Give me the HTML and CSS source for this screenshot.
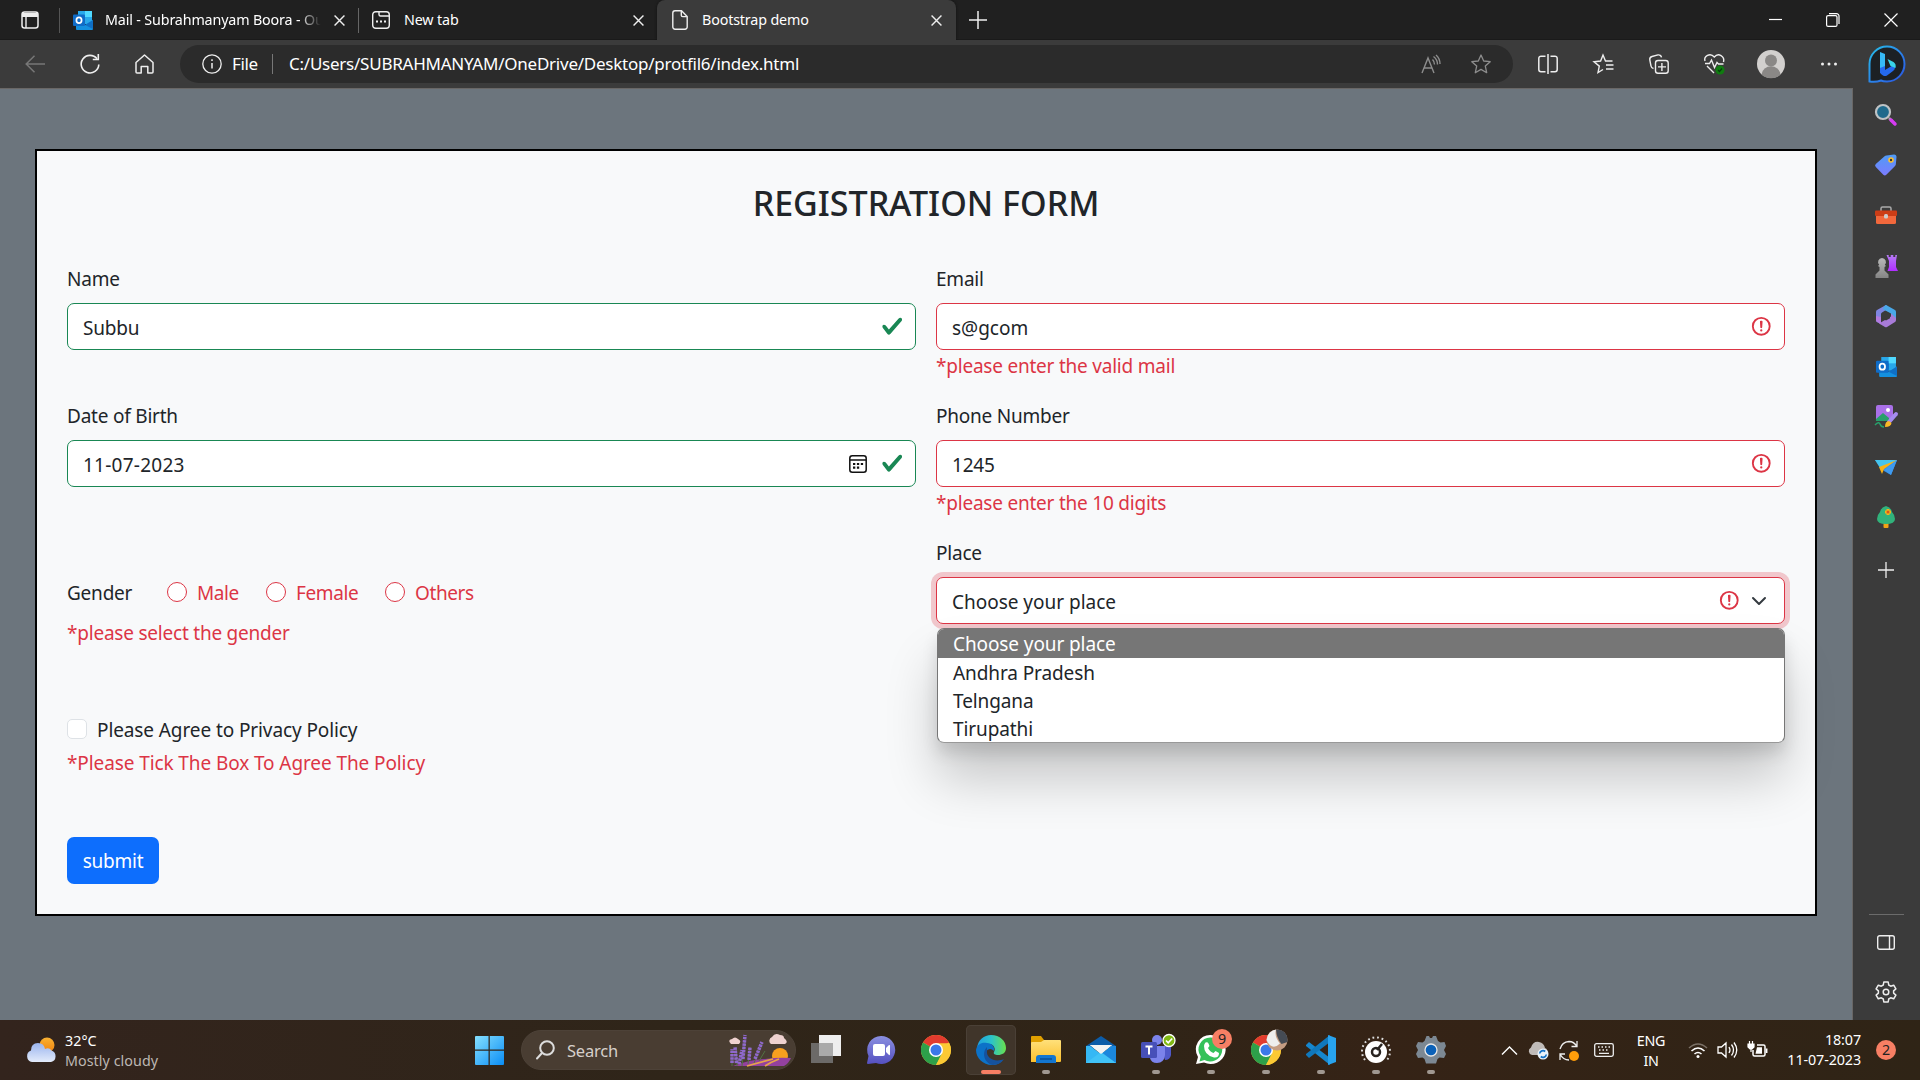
FILE: index.html
```html
<!DOCTYPE html>
<html lang="en">
<head>
<meta charset="utf-8">
<title>Bootstrap demo</title>
<link rel="stylesheet" href="styles.css">
</head>
<body>
<svg class="defs" width="0" height="0" aria-hidden="true">
  <defs>
    <linearGradient id="gBing" x1="0" y1="0" x2="1" y2="1"><stop offset="0" stop-color="#26c0ea"/><stop offset=".6" stop-color="#2b7be8"/><stop offset="1" stop-color="#2a52dd"/></linearGradient>
    <linearGradient id="gTag" x1="0" y1="0" x2="0" y2="1"><stop offset="0" stop-color="#4f9cf5"/><stop offset="1" stop-color="#7c7cff"/></linearGradient>
    <linearGradient id="gPurple" x1="0" y1="0" x2="0" y2="1"><stop offset="0" stop-color="#b57bf5"/><stop offset="1" stop-color="#b02dff"/></linearGradient>
    <linearGradient id="gGrey" x1="0" y1="0" x2="0" y2="1"><stop offset="0" stop-color="#b8b8b8"/><stop offset="1" stop-color="#858585"/></linearGradient>
    <linearGradient id="gWin" x1="0" y1="0" x2="1" y2="1"><stop offset="0" stop-color="#85e0ff"/><stop offset="1" stop-color="#0a8df5"/></linearGradient>
    <linearGradient id="gChat" x1="0" y1="0" x2="0" y2="1"><stop offset="0" stop-color="#8a8fe0"/><stop offset="1" stop-color="#5550c0"/></linearGradient>
    <linearGradient id="gEdgeTop" x1="0" y1="0" x2="1" y2="0"><stop offset="0" stop-color="#1f9fe0"/><stop offset=".5" stop-color="#2cc3c9"/><stop offset="1" stop-color="#69e04c"/></linearGradient>
    <linearGradient id="gFolder" x1="0" y1="0" x2="0" y2="1"><stop offset="0" stop-color="#ffe07a"/><stop offset="1" stop-color="#fbc02d"/></linearGradient>
    <linearGradient id="gCloud" x1="0" y1="0" x2="0" y2="1"><stop offset="0" stop-color="#9ab4ee"/><stop offset="1" stop-color="#e3ebfb"/></linearGradient>
    <linearGradient id="gSun" x1="0" y1="0" x2="0" y2="1"><stop offset="0" stop-color="#f9b233"/><stop offset="1" stop-color="#f0820f"/></linearGradient>
    <symbol id="check" viewBox="0 0 8 8"><path fill="#198754" d="M2.3 6.73.6 4.53c-.4-1.04.46-1.4 1.1-.8l1.1 1.4 3.4-3.8c.6-.63 1.6-.27 1.2.7l-4 4.6c-.43.5-.8.4-1.1.1z"/></symbol>
    <symbol id="alert" viewBox="0 0 12 12"><g fill="none" stroke="#dc3545"><circle cx="6" cy="6" r="4.5"/><path stroke-linejoin="round" d="M5.8 3.6h.4L6 6.5z"/></g><circle cx="6" cy="8.2" r=".6" fill="#dc3545"/></symbol>
    <symbol id="x" viewBox="0 0 10 10"><path d="M.5.5l9 9M9.5.5l-9 9" stroke="#eee" stroke-width="1.3" fill="none"/></symbol>
    <symbol id="outlook" viewBox="0 0 20 19"><rect x="5" y="0" width="14" height="13" fill="#28a8ea"/><path d="M12 0h7v6h-7z" fill="#50d9ff"/><path d="M5 6h7v6H5z" fill="#0a5fb0"/><path d="M3 9l9 5 8-5v9a1 1 0 0 1-1 1H4a1 1 0 0 1-1-1z" fill="#1490df"/><path d="M20 9v9l-8-4z" fill="#0f6fc5"/><rect x="0" y="3.500" width="12" height="11.500" rx="1" fill="#0f6cc8"/><ellipse cx="6" cy="9.200" rx="2.600" ry="2.900" fill="none" stroke="#fff" stroke-width="1.700"/></symbol>
    <symbol id="chrome" viewBox="0 0 30 30"><circle cx="15" cy="15" r="15" fill="#fcc934"/><path d="M2 7.500A15 15 0 0 1 28 7.500L15 15z" fill="#e23b2e"/><path d="M2 7.500A15 15 0 0 0 15 30l6.500-11.200L15 15z" fill="#2da04a"/><path d="M15 8.200h13.300A15 15 0 0 1 15 30l6-12z" fill="#fcc934"/><circle cx="15" cy="15" r="7" fill="#fff"/><circle cx="15" cy="15" r="5.500" fill="#3b78e7"/></symbol>
  </defs>
</svg>

<header class="tabs">
  <svg class="tabmenu" width="18" height="18" viewBox="0 0 18 18"><rect x="1" y="1" width="16" height="16" rx="2.500" fill="none" stroke="#eee" stroke-width="1.500"/><path d="M1 2h16v4H1z" fill="#eee"/><path d="M5 5v12" stroke="#eee" stroke-width="1.400"/></svg>
  <div class="tab mail"><svg width="20" height="19"><use href="#outlook"/></svg><span class="fade">Mail - Subrahmanyam Boora - Ou</span><svg class="close" width="11" height="11"><use href="#x"/></svg></div>
  <div class="tab newtab"><svg width="18" height="18" viewBox="0 0 18 18" fill="none" stroke="#eee" stroke-width="1.400"><rect x=".7" y=".7" width="16.600" height="16.600" rx="3"/><path d="M7 1v2.500a1.500 1.500 0 0 0 1.500 1.500H17"/><path d="M4 10.500h2m2 0h2m2 0h2" stroke-width="2"/></svg><span>New tab</span><svg class="close" width="11" height="11"><use href="#x"/></svg></div>
  <div class="tab active"><svg width="16" height="20" viewBox="0 0 16 20" fill="none" stroke="#eee" stroke-width="1.400"><path d="M3 .8h6.500L15.200 6.500V17a2.200 2.200 0 0 1-2.200 2.200H3A2.200 2.200 0 0 1 .8 17V3A2.200 2.200 0 0 1 3 .8z"/><path d="M9.300 1v4.200a1.400 1.400 0 0 0 1.400 1.400h4.300"/></svg><span>Bootstrap demo</span><svg class="close" width="11" height="11"><use href="#x"/></svg></div>
  <svg class="plus" width="18" height="18" viewBox="0 0 18 18"><path d="M9 0v18M0 9h18" stroke="#eee" stroke-width="1.500"/></svg>
  <div class="window">
    <svg width="14" height="14" viewBox="0 0 14 14"><path d="M0 6.500h13" stroke="#fff" stroke-width="1.200"/></svg>
    <svg width="14" height="14" viewBox="0 0 14 14" fill="none" stroke="#fff" stroke-width="1.200"><rect x=".6" y="2.600" width="10.400" height="10.800" rx="1.500"/><path d="M3 .6h7.500a2.500 2.500 0 0 1 2.500 2.500V11"/></svg>
    <svg width="14" height="14" viewBox="0 0 14 14"><path d="M.5.500l13 13M13.500.500l-13 13" stroke="#fff" stroke-width="1.200"/></svg>
  </div>
</header>

<nav class="toolbar">
  <svg class="nav" width="20" height="18" viewBox="0 0 20 18" fill="none" stroke="#777" stroke-width="1.500"><path d="M9.500.8L1.200 9l8.300 8.200M1.500 9H20"/></svg>
  <svg class="nav" width="20" height="20" viewBox="0 0 20 20" fill="none" stroke="#eee" stroke-width="1.600"><path d="M18.800 10.500A8.800 8.800 0 1 1 17 4.800"/><path d="M18.300 0v5.500h-5.500"/></svg>
  <svg class="nav" width="19" height="20" viewBox="0 0 19 20" fill="none" stroke="#eee" stroke-width="1.500" stroke-linejoin="round"><path d="M1 8.500L9.500 1 18 8.500V18a1 1 0 0 1-1 1h-4.200v-6.500H6.200V19H2a1 1 0 0 1-1-1z"/></svg>
  <div class="address">
    <svg width="20" height="20" viewBox="0 0 20 20" fill="none" stroke="#eee" stroke-width="1.300"><circle cx="10" cy="10" r="9.200"/><path d="M10 9v5.500M10 5.300v1.800" stroke-width="1.500"/></svg>
    <span class="scheme">File</span><i></i><span class="url">C:/Users/SUBRAHMANYAM/OneDrive/Desktop/protfil6/index.html</span>
    <svg class="read" width="20" height="19" viewBox="0 0 20 19" fill="none" stroke="#8d8d8d" stroke-width="1.400"><path d="M1 18L7 3l6 15M3 13h8M11.500 4.500q2 2 2 5M12.500 1.500q4 3 4 8M15 0q4 3.500 4 9"/></svg>
    <svg class="star" width="20" height="20" viewBox="0 0 20 20" fill="none" stroke="#8d8d8d" stroke-width="1.300" stroke-linejoin="round"><path d="M10 1l2.700 6 6.500.7-4.900 4.400 1.400 6.600L10 15.400l-5.700 3.300 1.400-6.600L.8 7.700 7.300 7z"/></svg>
  </div>
  <div class="tools">
    <svg width="20" height="20" viewBox="0 0 20 20" fill="none" stroke="#eee" stroke-width="1.500"><path d="M7.500 2.200H3A2.200 2.200 0 0 0 .8 4.400v11.200A2.200 2.200 0 0 0 3 17.800h4.500M12.500 2.200H17a2.200 2.200 0 0 1 2.200 2.200v11.200a2.200 2.200 0 0 1-2.200 2.200h-4.500M10 0v20"/></svg>
    <svg width="21" height="20" viewBox="0 0 21 20" fill="none" stroke="#eee" stroke-width="1.400"><path d="M10 15.500l-5 3 1.300-6.400L1 7.700 7.600 7 10 1l2.500 6h7M13 11h7.500M13 15h7.500"/></svg>
    <svg width="20" height="20" viewBox="0 0 20 20" fill="none" stroke="#eee" stroke-width="1.400"><path d="M4.500 14.500A3 3 0 0 1 2 12L.8 5.800a3 3 0 0 1 2.200-3.300l6-1.600a3 3 0 0 1 3.500 2.400"/><rect x="6.500" y="6.500" width="12.700" height="12.700" rx="2.500"/><path d="M12.900 9v8M9 12.900h8"/></svg>
    <svg width="21" height="21" viewBox="0 0 21 21" fill="none" stroke="#eee" stroke-width="1.400"><path d="M1 7C-.5 2.500 6-2 10.300 3 14.500-2 21 2.500 19.500 8M1 9.500h4.500l2-3.500 3 7.500 2.500-5 1.500 1.500h5M3 12l7 7"/><circle cx="16" cy="16" r="4.600" fill="#107c10" stroke="none"/><path d="M14 16l1.500 1.500 2.500-3" stroke="#06400b" stroke-width="1.200"/></svg>
    <svg width="28" height="28" viewBox="0 0 28 28"><circle cx="14" cy="14" r="14" fill="#d2d0ce"/><circle cx="14" cy="10.500" r="6" fill="#8a8886"/><path d="M4.500 24.500a9.600 9.600 0 0 1 19 0A14 14 0 0 1 4.500 24.500z" fill="#8a8886"/></svg>
    <svg width="18" height="6" viewBox="0 0 18 6" fill="#eee"><circle cx="2.500" cy="3" r="1.500"/><circle cx="9" cy="3" r="1.500"/><circle cx="15.500" cy="3" r="1.500"/></svg>
  </div>
  <svg class="bing" width="40" height="40" viewBox="0 0 40 40"><path d="M3.500 37.500V20A17.500 17.500 0 1 1 21 37.500q-4 0-6-1-5 2-11.500 1z" fill="#1c2024" stroke="url(#gBing)" stroke-width="2"/><path d="M14 8l5 2v15.500L14 29z" fill="#36b9f5"/><path d="M14 24l5-2v4l10-6v3.500q0 2-2 3.500l-6 4.500q-2 1-4 0l-2-1.500q-1-1-1-2z" fill="#2469ee"/><path d="M21.500 15l6 3q3 2 2 6l-5-2z" fill="#39d3e8"/></svg>
</nav>

<div class="middle">
<main class="page">
  <form class="card" onsubmit="return false">
    <h3>REGISTRATION FORM</h3>
    <div class="grid">
      <div class="cell"><label>Name</label><div class="input valid"><span>Subbu</span><svg class="state"><use href="#check"/></svg></div></div>
      <div class="cell"><label>Email</label><div class="input invalid"><span class="wide">s@gcom</span><svg class="state"><use href="#alert"/></svg></div><p class="err">*please enter the valid mail</p></div>
      <div class="cell"><label>Date of Birth</label><div class="input valid"><span class="num">11-07-2023</span><svg class="cal" viewBox="0 0 18 18" fill="none" stroke="#111" stroke-width="1.500"><rect x=".8" y=".8" width="16.400" height="16.400" rx="2.500"/><path d="M1 5h16"/><path d="M4 9h2.300m1.600 0h2.300m1.600 0h2.300M4 12.700h2.300m1.600 0h2.300" stroke-width="2.200"/></svg><svg class="state"><use href="#check"/></svg></div></div>
      <div class="cell"><label>Phone Number</label><div class="input invalid"><span>1245</span><svg class="state"><use href="#alert"/></svg></div><p class="err">*please enter the 10 digits</p></div>
      <div class="cell lower">
        <div class="choices"><span class="gender">Gender</span><span class="radio male"><i></i>Male</span><span class="radio female"><i></i>Female</span><span class="radio"><i></i>Others</span></div>
        <p class="err gap">*please select the gender</p>
      </div>
      <div class="cell"><label>Place</label>
        <div class="input invalid focus"><span class="wide">Choose your place</span><svg class="state"><use href="#alert"/></svg><svg class="chev" viewBox="0 0 16 16"><path fill="none" stroke="#343a40" stroke-linecap="round" stroke-linejoin="round" stroke-width="2" d="m2 5 6 6 6-6"/></svg>
          <ul class="menu"><li class="sel">Choose your place</li><li>Andhra Pradesh</li><li>Telngana</li><li>Tirupathi</li></ul>
        </div>
      </div>
      <div class="cell lower policy">
        <div class="choices"><i class="box"></i><span>Please Agree to Privacy Policy</span></div>
        <p class="err">*Please Tick The Box To Agree The Policy</p>
      </div>
    </div>
    <button class="submit">submit</button>
  </form>
</main>
<aside class="side">
  <svg viewBox="0 0 24 24"><path d="M15 15l3 3" stroke="#aaa" stroke-width="2.500"/><path d="M17 17l4 4" stroke="#d63bf2" stroke-width="3.500" stroke-linecap="round"/><circle cx="9" cy="9" r="7" fill="#1f6a8c" stroke="#bfc3c5" stroke-width="2.200"/></svg>
  <svg viewBox="0 0 24 24"><path d="M12.500 2.500L20 1.500q2.500 0 2.500 2.500l-.7 7.500q-.3 1-1 1.700l-8.500 8.500q-1.500 1.500-3 0L1.800 14q-1.500-1.500 0-3l8.500-7.500q1-1 2.200-1z" fill="url(#gTag)"/><circle cx="17" cy="7" r="2" fill="#333" stroke="#fbc02d" stroke-width="1.600"/></svg>
  <svg viewBox="0 0 24 24"><path d="M7 8V5.500Q7 4 8.500 4h7Q17 4 17 5.500V8" fill="none" stroke="#aaa" stroke-width="1.500"/><rect x="2" y="10" width="20" height="11" rx="1.500" fill="#f2683c"/><rect x="1" y="7.500" width="22" height="5.500" rx="1" fill="#cc3d16"/><rect x="10" y="11" width="4" height="4.500" rx="1.500" fill="#ccc"/></svg>
  <svg viewBox="0 0 24 24"><path d="M12.500 1h2.200v2h2V1h2.600v2h2V1H23l-1 6v6l2 4H13.500l1.500-4V7z" fill="url(#gPurple)"/><path d="M8 4a4 4 0 0 1 2.800 6.800L12 12l-1.500 1v3.500l4 4V24h-13v-3.500l4-4V13L4 12l1.200-1.200A4 4 0 0 1 8 4z" fill="url(#gGrey)"/></svg>
  <svg viewBox="0 0 24 24"><path d="M12 1L3 6q-1 .6-1 2v8q0 1.500 1 2l4 2V10q0-1 1-1.500L15 4z" fill="#7f86e2"/><path d="M11 1.500q1-.8 2 0L21 6q1 .6 1 2v8l-5-3V9.500L8.500 5z" fill="#49a8e8"/><path d="M22 14v2q0 1.500-1 2l-8 5q-1 .5-2 0l-6-3.500 12-7v-3z" fill="#a87bd8"/><path d="M2 12v4q0 1.500 1 2l4 2v-7z" fill="#b27be0"/><path d="M12 7.500l4 2.300v4.500l-4 2.300-4-2.300V9.800z" fill="#3b3b3b"/></svg>
  <svg class="ol"><use href="#outlook"/></svg>
  <svg viewBox="0 0 24 24"><rect x="2" y="1" width="17" height="16" rx="2" fill="#a970e8"/><path d="M2 15l7-6 6 5v3H2z" fill="#27a06b"/><circle cx="14" cy="6" r="2" fill="#fff"/><path d="M22 10L15 18" stroke="#a58cf0" stroke-width="4" stroke-linecap="round"/><path d="M15 17q-4 0-4 6 6 0 6.500-4z" fill="#f9b825"/><path d="M1 21q4-4 5-1t4 3" fill="none" stroke="#27a06b" stroke-width="1.500"/></svg>
  <svg viewBox="0 0 24 24"><path d="M1 5h22L17 20l-7-4z" fill="#2f8fe8"/><path d="M1 5h22L6 13z" fill="#45c4ee"/><path d="M23 5L5 12l3 7 2-5z" fill="#f9b216"/><path d="M23 5L10 15l7 5z" fill="#3f9bf0"/></svg>
  <svg viewBox="0 0 24 24"><rect x="9.500" y="15" width="5" height="8" rx="1" fill="#f0a315"/><path d="M12 1q5 1 6 6 3 3 3 7 0 5-9 5t-9-5q0-4 3-7 1-5 6-6z" fill="#31b27b"/><path d="M14 4v6M11 7h6" stroke="#f7b21b" stroke-width="3"/><circle cx="14" cy="7" r="1.500" fill="#d85a18"/></svg>
  <svg class="add" viewBox="0 0 16 16"><path d="M8 0v16M0 8h16" stroke="#eee" stroke-width="1.300"/></svg>
  <div class="sidefoot">
    <hr>
    <svg class="panel" viewBox="0 0 18 15" fill="none" stroke="#eee" stroke-width="1.400"><rect x=".7" y=".7" width="16.600" height="13.600" rx="2"/><path d="M12.500 1v13"/></svg>
    <svg class="gear" viewBox="0 0 22 22" fill="none" stroke="#eee" stroke-width="1.500" stroke-linejoin="round"><path d="M8.800 1h4.400l.5 3 2 1.200 3-1 2.200 3.700-2.300 2v2.200l2.300 2-2.200 3.700-3-1-2 1.200-.5 3H8.800l-.5-3-2-1.200-3 1-2.200-3.700 2.300-2V9.900l-2.300-2 2.200-3.700 3 1 2-1.200z"/><circle cx="11" cy="11" r="2.800"/></svg>
  </div>
</aside>
</div>

<footer class="taskbar">
  <div class="weather"><svg width="30" height="26" viewBox="0 0 30 26"><circle cx="21" cy="8" r="7.500" fill="url(#gSun)"/><path d="M6 25a6 6 0 0 1-1-11.500Q5 6 12 6q6 0 7 6 4-2 6.500 1.500A6 6 0 0 1 25 25z" fill="url(#gCloud)"/></svg><p>32°C<br><span>Mostly cloudy</span></p></div>
  <svg class="start" viewBox="0 0 30 30" fill="url(#gWin)"><path d="M1 0h13v14H0V1a1 1 0 0 1 1-1zM15.300 0H29a1 1 0 0 1 1 1v13H15.300zM0 15.300h14V30H1a1 1 0 0 1-1-1zM15.300 15.300H30V29a1 1 0 0 1-1 1H15.300z"/></svg>
  <div class="search"><svg width="19" height="20" viewBox="0 0 19 20" fill="none" stroke="#ddd" stroke-width="2"><circle cx="11" cy="8" r="6.800"/><path d="M6 13l-5 5.500" stroke-linecap="round"/></svg><span>Search</span>
    <svg class="flowers" width="62" height="32" viewBox="0 0 62 32"><circle cx="51" cy="22" r="8" fill="#f7a01f"/><path d="M4 32Q20 26 36 25q14-2 26-1-2 5-7 8z" fill="#93419f"/><path d="M18 32q14-4 26-7M36 32q6-4 14-7" stroke="#e5a34b" stroke-width="1.800" fill="none"/><path d="M3 32V15M8 32L7 13M13 32l3-27M19 30l2-17M25 29l8-20M30 27l6-10" stroke="#527343" stroke-width="1"/><path d="M3 29V15M7.500 29L6 13M14 25l2-24M20 26l1-13M26 25l7-17M10 30l3-14" stroke="#8f68cc" stroke-width="3.500" stroke-dasharray="2.500 .8"/><path d="M42 10a4 4 0 0 1 1-7q3-5 8-2 4 0 4 3 5 4 1 6zM2 10q-4-4 1-5 3-3 6 0 4 2 1 5z" fill="#efd2d0"/></svg>
  </div>
  <div class="apps">
    <div class="app"><svg viewBox="0 0 30 30"><rect x="8" y="0" width="22" height="21" fill="#eee"/><rect x="0" y="8" width="22" height="20" fill="#777" opacity=".85"/><path d="M8 8h14v13H8z" fill="#aaa"/></svg></div>
    <div class="app"><svg viewBox="0 0 30 30"><path d="M15 1a14 14 0 1 1-5 27l-8 1q-1 0-1-1l1.500-7A14 14 0 0 1 15 1z" fill="url(#gChat)"/><rect x="7" y="9" width="12" height="12" rx="2" fill="#fff"/><path d="M20 13l3-3q1-.5 1 1v8q0 1.500-1 1l-3-3z" fill="#fff"/></svg></div>
    <div class="app"><svg><use href="#chrome"/></svg></div>
    <div class="app on"><svg viewBox="0 0 30 30"><path d="M1 13C2 5 8 0 15 0c9 0 15 6 15 13 0 5-4 7-8 7-3 0-5-1-4-3 2-3 0-8-5-8-6 0-11 3-12 7z" fill="url(#gEdgeTop)"/><path d="M0 15C1 9 6 7 11 8c5 0 8 4 7 8-1-1-2-2-4-2-7 1-6 11 2 13q6 2 11-2-4 5-11 5C7 30 0 23 0 15z" fill="#0c72c8"/><path d="M11 12c-6 6-2 17 6 18 5 0 9-3 11-6-9 4-18-1-17-8z" fill="#15529e"/></svg><b></b></div>
    <div class="app"><svg viewBox="0 0 30 30"><path d="M0 2q0-1 1-1h9l3 4v6H0z" fill="#e0a000"/><path d="M0 8q0-1 1-1h9l3-2h16q1 0 1 1v20q0 1-1 1H0z" fill="url(#gFolder)"/><path d="M5 28v-5q0-3 3-3h14q3 0 3 3v5z" fill="#1376d0"/><path d="M9 24h12" stroke="#0a4f96" stroke-width="1.500"/></svg><b></b></div>
    <div class="app"><svg viewBox="0 0 30 30"><path d="M15 1l15 10v3H0v-3z" fill="#0c5ca8"/><path d="M4 10h22L15 19z" fill="#f3f3f3"/><path d="M0 11h4l11 8 11-8h4v17H0z" fill="#35b8f5"/><path d="M30 11v17L15 19l11-8z" fill="#1b87dd"/><path d="M0 28l15-11 15 11z" fill="#41c3f7"/><path d="M4 10h22L15 19z" fill="#f3f3f3"/></svg></div>
    <div class="app"><svg viewBox="0 0 30 30"><circle cx="16" cy="5" r="5" fill="#7b83eb"/><path d="M19 11h11v9q-1 5-6 5z" fill="#5059c9"/><path d="M9 11h15v9q-1 8-8 8-6 0-7-5z" fill="#7b83eb"/><rect x="0" y="7" width="16" height="16" rx="1.500" fill="#4750b8"/><path d="M4.500 11.500h7M8 11.500v8" stroke="#fff" stroke-width="2"/><circle cx="28" cy="5.500" r="6" fill="#81b915" stroke="#fff" stroke-width="1.300"/><path d="M25 5.500l2.200 2.300 4-4.300" stroke="#fff" stroke-width="1.700" fill="none"/></svg><b></b></div>
    <div class="app"><svg viewBox="0 0 30 30"><path d="M15 0a15 14.500 0 1 1-7 27.500L0 29l2-7A14.500 14.500 0 0 1 15 0z" fill="#fff"/><path d="M15 2.500a12 12 0 1 1-6.500 22.500l-5 1.500 1.300-5A12 12 0 0 1 15 2.500z" fill="#35c15a"/><path d="M9.500 7.500q2-1 3 1l1 2.500-1.500 2q2 4 5.500 5l2-2 3.500 2q0 5-5 4.500Q8 20 8 11q0-2 1.500-3.500z" fill="#fff"/></svg><em>9</em><b></b></div>
    <div class="app"><svg viewBox="0 0 30 30"><use href="#chrome"/><circle cx="26" cy="5" r="10.500" fill="#c49c82"/><path d="M15.500 5Q17-4 25-5.500q-2 7 4 14-8 8-13.500-3.500z" fill="#eee"/><path d="M25-5.500q12 0 11.500 12.500l-6 2q-5-6-5.500-14.500z" fill="#454b54"/></svg><b></b></div>
    <div class="app"><svg viewBox="0 0 30 30"><path d="M0 10l3-3 21 16v7L0 11z" fill="#1687ce"/><path d="M0 20l3 3L24 7V0L0 19z" fill="#1078bc"/><path d="M22 0l8 3v24l-8 3z" fill="#28a3ee"/></svg><b></b></div>
    <div class="app"><svg viewBox="0 0 30 30"><path d="M4 25A14 14 0 1 1 26 25" fill="none" stroke="#ddd" stroke-width="2" stroke-dasharray="1.800 2.800"/><circle cx="15" cy="17" r="11" fill="#fff"/><circle cx="15" cy="17" r="4" fill="none" stroke="#292421" stroke-width="2.500"/><path d="M16 15l5-6" stroke="#292421" stroke-width="2.500"/></svg><b></b></div>
    <div class="app"><svg viewBox="0 0 30 30"><path d="M10.500 1h2.500l1 2h2l1-2h3l2 5 2.500 1.500 4-.5 1.500 4-2 4 2 4-2 4-4.500-.5-2 1.500-1.500 4.500h-10L8.500 24l-2-1.500-4.500.5-2-4 2-4-2-4 2-4 4.500.5L8.500 6z" fill="#7c8893"/><circle cx="15" cy="15" r="6" fill="#0b61b8" stroke="#e8e8e8" stroke-width="1.300"/></svg><b></b></div>
  </div>
  <div class="tray">
    <svg width="17" height="9" viewBox="0 0 17 9"><path d="M1 8.500L8.500 1 16 8.500" fill="none" stroke="#fff" stroke-width="1.400"/></svg>
    <svg width="21" height="18" viewBox="0 0 21 18"><path d="M4 14a4 4 0 0 1-1-7.500Q5 0 11 1q5 1 6 6 3 1 3 7z" fill="#c0bbb8"/><circle cx="15" cy="13" r="5.500" fill="#e9f3fb"/><path d="M11.700 12.500a3.300 3.300 0 0 1 5.500-2M18.300 13.500a3.300 3.300 0 0 1-5.500 2" stroke="#1473c8" stroke-width="1.700" fill="none"/></svg>
    <svg width="20" height="21" viewBox="0 0 20 21"><path d="M1 9Q3 2 10 1.500q5 0 8 5M18 1v5.500h-5.500M1 14q3 6 9 6M1 20v-6h5" fill="none" stroke="#eee" stroke-width="1.300"/><circle cx="15" cy="16" r="5" fill="#ff9d0a"/></svg>
    <svg width="20" height="14" viewBox="0 0 20 14" fill="none" stroke="#eee" stroke-width="1.300"><rect x=".7" y=".7" width="18.600" height="12.600" rx="1.800"/><path d="M4 4h1.500m2 0H9m2 0h1.500m2 0H16M5 7h1.500m2 0H10m2 0h1.500M5 10.300h10"/></svg>
    <p class="lang">ENG<br>IN</p>
    <svg width="20" height="17" viewBox="0 0 20 17" fill="none" stroke="#fff" stroke-width="1.600"><path d="M1 6q9-8 18 0" stroke="#7b7167"/><path d="M3.500 9q6.500-6 13 0M6.500 12q3.500-3 7 0"/><circle cx="10" cy="14.500" r="1.500" fill="#fff" stroke="none"/></svg>
    <svg width="21" height="18" viewBox="0 0 21 18" fill="none" stroke="#fff" stroke-width="1.300"><path d="M1 6h3.500L9 2v14l-4.500-4H1zM12 6q2 3 0 6M14.500 3.500q4 5.500 0 11M17 1.500q5.500 7.500 0 15"/></svg>
    <svg width="20" height="18" viewBox="0 0 20 18" fill="none" stroke="#fff" stroke-width="1.500"><path d="M9 4h6.500a1.500 1.500 0 0 1 1.500 1.500v8a1.500 1.500 0 0 1-1.500 1.500h-9A1.500 1.500 0 0 1 5 13.500V9M18.700 7.500v4.500"/><path d="M7.500 12.700h6.500V6.300H9z" fill="#fff" stroke="none"/><path d="M0 3h6v3L4 8H2L0 6zM1.500 0v3M4.500 0v3M3 8v3" fill="#fff" stroke-width="1.200"/></svg>
    <p class="clock">18:07<br>11-07-2023</p>
    <span class="note">2</span>
  </div>
</footer>
</body>
</html>
```
FILE: styles.css
```css
* { box-sizing: border-box; }
body { margin: 0; width: 1920px; height: 1080px; overflow: hidden; display: flex; flex-direction: column; background: #202020; color: #fff; font-family: "Noto Sans", "Open Sans", sans-serif; }
svg { display: block; flex: none; overflow: visible; }
.defs { position: absolute; }
p, h3, ul { margin: 0; padding: 0; }

.tabs { height: 40px; display: flex; align-items: center; font-size: 14.3px; letter-spacing: -0.15px; background: #202020; box-shadow: inset 0 -1px #1a1a1a; }
.tabmenu { margin: 0 20px 0 21px; }
.tab { height: 40px; display: flex; align-items: center; white-space: nowrap; }
.tab span { padding-bottom: 2px; }
.tab .close { margin-left: auto; }
.mail { width: 299px; padding: 0 13px 0 14px; background: linear-gradient(#555, #555) 0 8px / 1px 25px no-repeat; }
.mail span { margin-left: 12px; width: 218px; overflow: hidden; -webkit-mask-image: linear-gradient(90deg, #000 89%, transparent 99%); mask-image: linear-gradient(90deg, #000 89%, transparent 99%); }
.newtab { width: 299px; padding: 0 13px 0 14px; background: linear-gradient(#666, #666) 0 8px / 1px 25px no-repeat; }
.newtab span { margin-left: 14px; }
.active { width: 299px; padding: 0 14px 0 15px; background: #3b3b3b; border-radius: 8px 8px 0 0; box-shadow: 0 0 3px #111; clip-path: inset(0 -4px 0 -4px); }
.active span { margin-left: 14px; }
.plus { margin-left: 13px; }
.window { margin: 0 22px 0 auto; display: flex; }
.window svg { margin-left: 43px; }
.window svg:last-child { margin-left: 44px; }

.toolbar { height: 48px; display: flex; align-items: center; background: #3b3b3b; }
.nav { margin-left: 35px; }
.nav:first-child { margin-left: 25px; }
.address { flex: none; width: 1333px; height: 38px; margin-left: 26px; padding: 0 22px; border-radius: 19px; background: #2b2b2b; display: flex; align-items: center; font-size: 17px; }
.address span { padding-bottom: 2px; }
.scheme { margin-left: 10px; width: 28px; letter-spacing: -.4px; }
.address i { width: 1px; height: 20px; margin: 0 16px 0 12px; background: #777; }
.url { letter-spacing: -.24px; white-space: nowrap; }
.read { margin-left: auto; margin-right: 30px; }
.tools { flex: none; width: 353px; display: flex; align-items: center; }
.tools svg { margin: 0 17.500px; }
.tools svg:first-child { margin-left: 25px; }
.tools svg:nth-child(5) { margin: 0 0 0 14px; }
.tools svg:nth-child(6) { margin: 0 0 0 35px; }

.middle { height: 932px; display: flex; }
.page { width: 1853px; padding: 60px 35px 0 35px; background: #6c757d; border-top: 1px solid #696766; border-right: 1px solid #696766; }
.card { height: 767px; padding: 31px 30px; border: 2px solid #000; background: #f8f9fa; color: #212529; font-size: 19px; line-height: 30px; letter-spacing: -.22px; }
.card h3 { height: 42px; margin-bottom: 39px; text-align: center; font-size: 34px; line-height: 42px; font-weight: 500; letter-spacing: 0; }
.grid { display: grid; grid-template-columns: 849px 849px; column-gap: 20px; grid-template-rows: 137px 137px 137px 163px; }
.cell label { display: block; height: 30px; margin-bottom: 10px; padding-top: 1px; }
.input { position: relative; height: 47px; padding: 0 12px 0 15px; border: 1px solid #198754; border-radius: 7px; background: #fff; display: flex; align-items: center; }
.input > span { margin-right: auto; padding-top: 2px; }
.input > .num { letter-spacing: .25px; }
.input > .wide { letter-spacing: -.02px; }
.invalid { border-color: #dc3545; }
.state { width: 22.500px; height: 22.500px; }
.cal { width: 18px; height: 18px; margin-right: 14px; }
.chev { width: 16px; height: 16px; margin: 0 5px 0 11px; }
.focus { box-shadow: 0 0 0 5px rgba(220, 53, 69, .25); }
.err { padding-top: 1px; color: #dc3545; }
.lower { padding-top: 40px; }
.choices { height: 31px; display: flex; align-items: center; line-height: 31px; padding-top: 1px; }
.choices i { position: relative; top: -1px; }
.gender { width: 100px; }
.radio { color: #dc3545; display: flex; align-items: center; letter-spacing: -.4px; }
.radio i { width: 20px; height: 20px; margin-right: 10px; border: 1px solid #dc3545; border-radius: 50%; background: #fff; }
.male { width: 99px; }
.female { width: 119px; }
.gap { margin-top: 9px; }
.policy { letter-spacing: -.1px; }
.policy .err { margin-top: 2px; }
.box { width: 20px; height: 20px; margin-right: 10px; border: 1px solid #dee2e6; border-radius: 5px; background: #fff; }
.submit { width: 92px; height: 47px; padding: 1px 0 0; border: 0; border-radius: 7px; background: #0d6efd; color: #fff; font: inherit; letter-spacing: inherit; }
.menu { position: absolute; z-index: 2; left: 0; top: 50px; width: 848px; height: 115px; list-style: none; border: 1px solid #767676; border-bottom-color: #999; border-radius: 7px; background: #fff; overflow: hidden; box-shadow: 0 36px 52px rgba(0, 0, 0, .2), 0 10px 16px rgba(0, 0, 0, .12); line-height: 30px; letter-spacing: -.1px; }
.menu li { height: 28px; padding-left: 15px; }
.menu .sel { height: 29px; line-height: 31px; background: #767676; color: #fff; }

.side { width: 67px; padding: 2px 1px 0 0; background: #3b3b3b; display: flex; flex-direction: column; align-items: center; }
.side > svg { width: 24px; height: 24px; margin: 13px 0 13.200px; }
.side > .ol { width: 21px; height: 20px; margin: 16px 0 14.500px; }
.side > .add { width: 16px; height: 16px; margin-top: 19.500px; }
.sidefoot { margin-top: auto; display: flex; flex-direction: column; align-items: center; }
.side hr { width: 35px; height: 1px; margin: 0 0 20px; border: 0; background: #6b6b6b; }
.panel { width: 18px; height: 15px; }
.gear { width: 22px; height: 22px; margin: 31px 0 17px; }

.taskbar { height: 60px; display: flex; align-items: center; background: linear-gradient(90deg, #33241d, #2f2519 35%, #302417 60%, #352316 72%, #2f2416); font-size: 14.3px; line-height: 20px; letter-spacing: 0; }
.weather { flex: none; width: 449px; padding-left: 26px; display: flex; align-items: center; }
.weather p { margin-left: 9px; padding-top: 2px; letter-spacing: .05px; }
.weather span { color: #bdb7b3; }
.start { margin-left: 26px; width: 29px; height: 29px; }
.search { flex: none; width: 275px; height: 40px; margin-left: 17px; padding: 0 4px 0 14px; display: flex; align-items: center; border: 1px solid #4d4238; border-radius: 20px; background: #493d32; font-size: 16.500px; letter-spacing: -.2px; color: #d6d0cb; }
.search span { margin-left: 12px; padding-top: 1px; }
.flowers { margin-left: auto; }
.apps { margin-left: 5px; display: flex; gap: 5px; }
.app { position: relative; width: 50px; height: 50px; padding: 10px; border-radius: 5px; }
.app svg { width: 30px; height: 30px; }
.app b { position: absolute; left: 21px; bottom: 1px; width: 8px; height: 4px; border-radius: 2px; background: #a09891; }
.on { background: #40352a; box-shadow: inset 0 0 0 1px #4a4036; }
.on b { left: 15px; width: 20px; background: #f77f64; }
.app em { position: absolute; left: 26px; top: 4px; width: 20px; height: 20px; border-radius: 50%; background: #f77f64; color: #222; font-style: normal; text-align: center; }
.tray { flex: 1; padding-left: 45px; display: flex; align-items: center; }
.tray svg:nth-of-type(2) { margin-left: 10px; }
.tray svg:nth-of-type(3) { margin-left: 10px; }
.tray svg:nth-of-type(4) { margin-left: 15px; }
.lang { width: 40px; margin: 0 17px; padding-top: 1px; text-align: center; letter-spacing: -.3px; }
.tray svg:nth-of-type(6) { margin-left: 9px; }
.tray svg:nth-of-type(7) { margin-left: 10px; }
.clock { margin-left: auto; text-align: right; white-space: nowrap; letter-spacing: -.1px; }
.note { width: 20px; height: 20px; margin: 0 24px 0 15px; border-radius: 50%; background: #f77f64; color: #222; text-align: center; }
```
